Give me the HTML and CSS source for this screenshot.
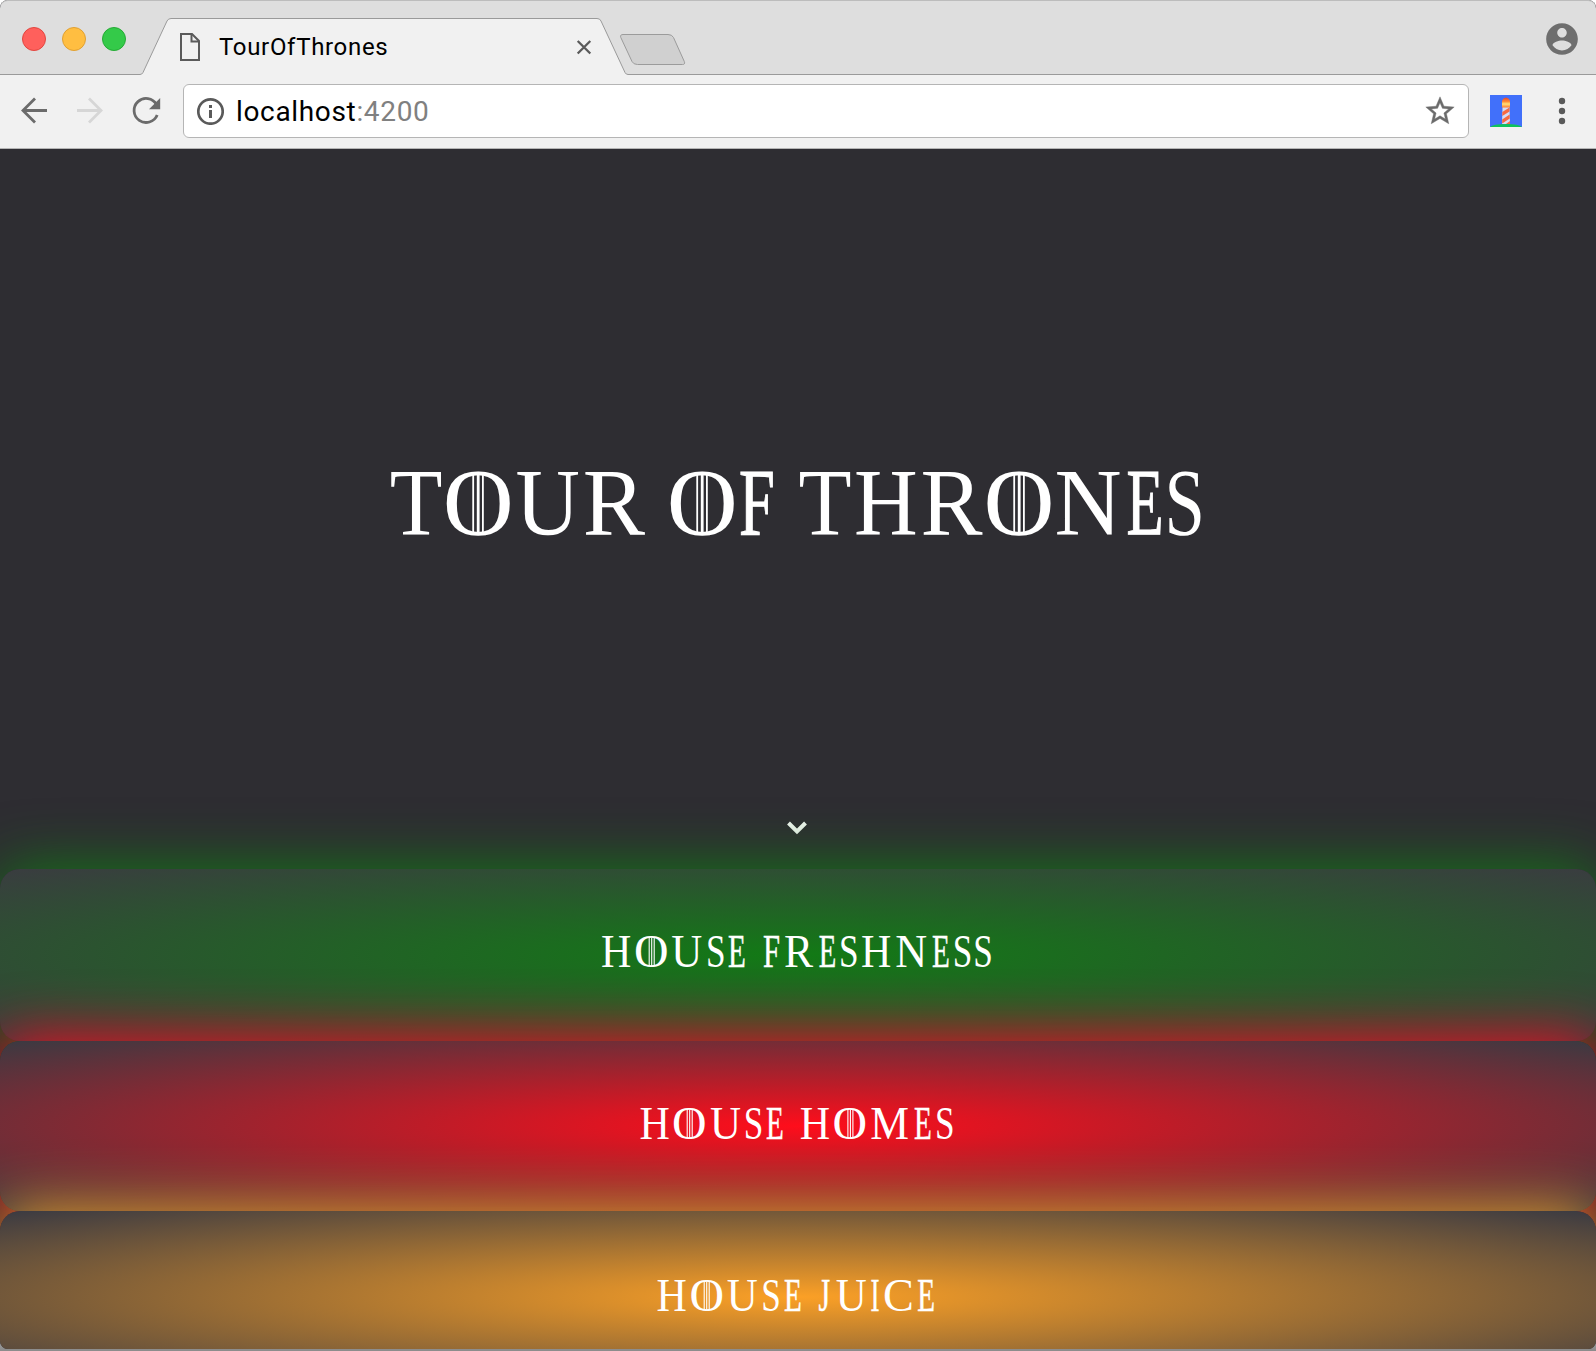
FILE: index.html
```html
<!DOCTYPE html>
<html lang="en">
<head>
<meta charset="utf-8">
<title>TourOfThrones</title>
<link rel="stylesheet" href="styles.css">
</head>
<body>
<div class="window">
  <div class="tabstrip">
    <svg class="tab-shape" width="1596" height="75" viewBox="0 0 1596 75">
      <path d="M-1 74.5H140Q142 74.5 143 72.5L167 21Q168.200 18.500 171 18.500H597Q600 18.500 601 21L625 72.500Q626 74.500 628 74.500H1597V76H-1Z" fill="#f1f1f1" stroke="#9a9a9a"/>
      <path d="M623 34.500H668Q672 34.500 673.500 37.500L684.300 61.500Q685.500 64.500 682.500 64.500H637.500Q633.500 64.500 632 61.500L620.800 37.500Q619.800 34.500 623 34.500Z" fill="#d0d0d0" stroke="#9b9b9b"/>
    </svg>
    <div class="lights">
      <span class="light close"></span><span class="light minimize"></span><span class="light expand"></span>
    </div>
    <div class="tab">
      <svg width="22" height="30" viewBox="179 32 22 30" fill="none" stroke="#5a5a5a" stroke-width="2"><path d="M181 34H192L199 41V60H181Z"/><path d="M191.500 34V41.500H199"/></svg>
      <span class="tab-title">TourOfThrones</span>
      <svg class="tab-close" width="18" height="18" viewBox="575 38 18 18"><path d="M577.700 41L590.300 53.500M590.300 41L577.700 53.500" stroke="#5a5a5a" stroke-width="2.300"/></svg>
    </div>
    <svg class="avatar" width="38" height="38" viewBox="0 0 24 24" fill="#6e6e6e"><path d="M12 2C6.480 2 2 6.480 2 12s4.480 10 10 10 10-4.480 10-10S17.520 2 12 2zm0 3c1.660 0 3 1.340 3 3s-1.340 3-3 3-3-1.340-3-3 1.340-3 3-3zm0 14.200c-2.500 0-4.710-1.280-6-3.220.030-1.990 4-3.080 6-3.080 1.990 0 5.970 1.090 6 3.080-1.290 1.940-3.500 3.220-6 3.220z"/></svg>
  </div>

  <div class="toolbar">
    <svg class="nav-icons" width="145" height="32" viewBox="18 95 145 32" fill="none" stroke-width="2.800">
      <path d="M47 110.500H23M35 98.500L23 110.500L35 122.500" stroke="#6b6b6b"/>
      <path d="M77 110.500H101M89 98.500L101 110.500L89 122.500" stroke="#d6d6d6"/>
      <path d="M156.500 104.500A12 12 0 1 0 157.200 115" stroke="#6b6b6b"/>
      <path d="M160.200 98V109.200H149Z" fill="#6b6b6b"/>
    </svg>
    <div class="omnibox">
      <svg class="info" width="28" height="28" viewBox="0 0 28 28"><circle cx="14.500" cy="14.500" r="12.200" fill="none" stroke="#5a5a5a" stroke-width="2.700"/><path d="M13 8h3v3h-3zM13 13h3v8h-3z" fill="#5a5a5a"/></svg>
      <span class="url">localhost<span class="port">:4200</span></span>
      <svg class="star" width="34" height="34" viewBox="0 0 24 24" fill="#6b6b6b" stroke="#6b6b6b" stroke-width=".3"><path d="M22 9.240l-7.190-.620L12 2 9.190 8.630 2 9.240l5.460 4.730L5.820 21 12 17.270 18.180 21l-1.630-7.030L22 9.240zM12 15.400l-3.760 2.270 1-4.280-3.320-2.880 4.380-.380L12 6.100l1.710 4.040 4.380.380-3.320 2.880 1 4.280L12 15.400z"/></svg>
    </div>
    <svg class="lighthouse" width="32" height="32" viewBox="0 0 32 32">
      <defs><linearGradient id="lamp" x2="0" y2="1"><stop offset="0" stop-color="#e8432c"/><stop offset=".4" stop-color="#ff8a35"/><stop offset=".65" stop-color="#ffe27a"/><stop offset="1" stop-color="#ff7a2e"/></linearGradient></defs>
      <rect width="32" height="32" fill="#4170fa"/>
      <path d="M0 32Q3 29 16 29T32 32Z" fill="#0ec25c"/>
      <path d="M12.500 12H19.500L20 29H12Z" fill="#d5dcf4"/>
      <path d="M12.300 17L19.500 12.500V16.500L12.300 21ZM12.200 24.500L19.700 19.500V23.500L12.200 28.500ZM16 29L20 26V29Z" fill="#f8693f"/>
      <path d="M12 12.500V6.500Q12.500 3 16 2.500Q19.500 3 20 6.500V12.500Z" fill="url(#lamp)"/>
    </svg>
    <svg width="8" height="28" viewBox="0 0 8 28" fill="#5a5a5a"><circle cx="4" cy="4" r="3.200"/><circle cx="4" cy="14" r="3.200"/><circle cx="4" cy="24" r="3.200"/></svg>
  </div>

  <main class="page">
    <header class="hero">
      <h1 class="title">
        <svg class="lettering" width="1596" height="120" viewBox="0 445 1596 120">
          <text class="display" y="534.700"><tspan x="389.800" textLength="52.700" lengthAdjust="spacingAndGlyphs">T</tspan><tspan x="442.700" textLength="71" lengthAdjust="spacingAndGlyphs">O</tspan><tspan x="515.500" textLength="64.400" lengthAdjust="spacingAndGlyphs">U</tspan><tspan x="582.700" textLength="62.300" lengthAdjust="spacingAndGlyphs">R</tspan> <tspan x="666.700" textLength="71" lengthAdjust="spacingAndGlyphs">O</tspan><tspan class="narrow" x="738.900" textLength="35.700" lengthAdjust="spacingAndGlyphs">F</tspan> <tspan x="798.500" textLength="53" lengthAdjust="spacingAndGlyphs">T</tspan><tspan x="854" textLength="63.700" lengthAdjust="spacingAndGlyphs">H</tspan><tspan x="920.400" textLength="62" lengthAdjust="spacingAndGlyphs">R</tspan><tspan x="983.400" textLength="71" lengthAdjust="spacingAndGlyphs">O</tspan><tspan x="1054.600" textLength="67.100" lengthAdjust="spacingAndGlyphs">N</tspan><tspan class="narrow" x="1126.600" textLength="37" lengthAdjust="spacingAndGlyphs">E</tspan><tspan x="1164.600" textLength="40.400" lengthAdjust="spacingAndGlyphs">S</tspan></text>
          <path class="bars" d="M473.200 473V533M482.900 473V533M697.200 473V533M706.900 473V533M1014.200 473V533M1023.900 473V533"/>
          <path class="bars middle" d="M478.200 473V533M702.200 473V533M1019.200 473V533"/>
        </svg>
      </h1>
      <svg class="chevron" width="22" height="16" viewBox="0 0 22 16"><path d="M2.500 3L11 11.500L19.500 3" fill="none" stroke="#f2f7f2" stroke-width="4"/></svg>
    </header>

    <section class="house freshness">
      <svg class="lettering" width="1596" height="60" viewBox="0 922 1596 60">
        <text class="name" y="966.600"><tspan x="601" textLength="30.300" lengthAdjust="spacingAndGlyphs">H</tspan><tspan x="633.900" textLength="34.600" lengthAdjust="spacingAndGlyphs">O</tspan><tspan x="671.200" textLength="31" lengthAdjust="spacingAndGlyphs">U</tspan><tspan x="706" textLength="19.600" lengthAdjust="spacingAndGlyphs">S</tspan><tspan class="slim" x="728.100" textLength="17.800" lengthAdjust="spacingAndGlyphs">E</tspan> <tspan class="slim" x="763.100" textLength="17" lengthAdjust="spacingAndGlyphs">F</tspan><tspan x="784.100" textLength="29.100" lengthAdjust="spacingAndGlyphs">R</tspan><tspan class="slim" x="818.800" textLength="17.500" lengthAdjust="spacingAndGlyphs">E</tspan><tspan x="839" textLength="19.600" lengthAdjust="spacingAndGlyphs">S</tspan><tspan x="861" textLength="30.300" lengthAdjust="spacingAndGlyphs">H</tspan><tspan x="895.300" textLength="31.900" lengthAdjust="spacingAndGlyphs">N</tspan><tspan class="slim" x="932.100" textLength="17.800" lengthAdjust="spacingAndGlyphs">E</tspan><tspan x="952.700" textLength="19.600" lengthAdjust="spacingAndGlyphs">S</tspan><tspan x="973.300" textLength="19.600" lengthAdjust="spacingAndGlyphs">S</tspan></text>
        <path class="bars thin" d="M649.200 937.500V966M651.700 937.500V966M654.200 937.500V966"/>
      </svg>
    </section>
    <section class="house homes">
      <svg class="lettering" width="1596" height="60" viewBox="0 1094 1596 60">
        <text class="name" y="1138.600"><tspan x="639.400" textLength="30.300" lengthAdjust="spacingAndGlyphs">H</tspan><tspan x="671.900" textLength="34.600" lengthAdjust="spacingAndGlyphs">O</tspan><tspan x="709.900" textLength="31" lengthAdjust="spacingAndGlyphs">U</tspan><tspan x="743.700" textLength="19.600" lengthAdjust="spacingAndGlyphs">S</tspan><tspan class="slim" x="766.100" textLength="17.800" lengthAdjust="spacingAndGlyphs">E</tspan> <tspan x="799.700" textLength="30.300" lengthAdjust="spacingAndGlyphs">H</tspan><tspan x="832.600" textLength="34.600" lengthAdjust="spacingAndGlyphs">O</tspan><tspan x="870.300" textLength="38.700" lengthAdjust="spacingAndGlyphs">M</tspan><tspan class="slim" x="914.100" textLength="17.800" lengthAdjust="spacingAndGlyphs">E</tspan><tspan x="935" textLength="19.600" lengthAdjust="spacingAndGlyphs">S</tspan></text>
        <path class="bars thin" d="M687.200 1109.500V1138M689.700 1109.500V1138M692.200 1109.500V1138M847.900 1109.500V1138M850.400 1109.500V1138M852.900 1109.500V1138"/>
      </svg>
    </section>
    <section class="house juice">
      <svg class="lettering" width="1596" height="60" viewBox="0 1266 1596 60">
        <text class="name" y="1310.600"><tspan x="656.500" textLength="30.300" lengthAdjust="spacingAndGlyphs">H</tspan><tspan x="689.400" textLength="34.600" lengthAdjust="spacingAndGlyphs">O</tspan><tspan x="726.700" textLength="31" lengthAdjust="spacingAndGlyphs">U</tspan><tspan x="761.200" textLength="19.600" lengthAdjust="spacingAndGlyphs">S</tspan><tspan class="slim" x="783.900" textLength="17.800" lengthAdjust="spacingAndGlyphs">E</tspan> <tspan class="slim" x="818.400" textLength="11.600" lengthAdjust="spacingAndGlyphs">J</tspan><tspan x="835.700" textLength="31" lengthAdjust="spacingAndGlyphs">U</tspan><tspan class="slim" x="870.500" textLength="9" lengthAdjust="spacingAndGlyphs">I</tspan><tspan x="883" textLength="30.900" lengthAdjust="spacingAndGlyphs">C</tspan><tspan class="slim" x="917.300" textLength="17.800" lengthAdjust="spacingAndGlyphs">E</tspan></text>
        <path class="bars thin" d="M704.200 1281.500V1310M706.700 1281.500V1310M709.200 1281.500V1310"/>
      </svg>
    </section>
  </main>
</div>
</body>
</html>
```

FILE: styles.css
```css
* { box-sizing: border-box; }

body {
  margin: 0;
  height: 1351px;
  overflow: hidden;
  background: linear-gradient(#fff 0 1300px, #8c8c8c 1350px);
  font-family: Roboto, "Liberation Sans", sans-serif;
}

svg { display: block; flex: none; }

.window {
  display: flex;
  flex-direction: column;
  height: 1349px;
  overflow: hidden;
  border-radius: 8px;
  background: #2e2d32;
}

/* Browser frame */
.tabstrip {
  position: relative;
  display: flex;
  align-items: center;
  flex: none;
  height: 75px;
  padding: 3px 15px 0 22px;
  border-radius: 8px 8px 0 0;
  background: #dedede;
  box-shadow: inset 0 1px #bcbcbc;
}

.tab-shape { position: absolute; left: 0; top: 0; }

.lights { display: flex; gap: 16px; }

.light {
  width: 24px;
  height: 24px;
  border: 1px solid;
  border-radius: 50%;
}

.close { background: #ff605c; border-color: #e2463f; }
.minimize { background: #ffbe41; border-color: #e0a032; }
.expand { background: #34ca49; border-color: #25ab35; }

.tab {
  position: relative;
  display: flex;
  align-items: center;
  width: 414px;
  margin: 15px 0 0 53px;
}

.tab-title {
  margin-left: 18px;
  font-size: 24px;
  line-height: 30px;
  letter-spacing: 0.68px;
  color: #000;
}

.tab-close { margin-left: auto; }

.avatar { position: relative; margin-left: auto; }

.toolbar {
  display: flex;
  align-items: center;
  flex: none;
  height: 74px;
  padding: 0 30px 2px 18px;
  border-bottom: 1px solid #b5b5b5;
  background: #f1f1f1;
}

.omnibox {
  display: flex;
  align-items: center;
  width: 1286px;
  height: 54px;
  margin: 1px 21px 0 20px;
  padding: 0 11px 0 12px;
  border: 1px solid #b5b5b5;
  border-radius: 6px;
  background: #fff;
}

.url {
  margin: 0 auto 0 12px;
  padding-top: 2px;
  font-size: 28px;
  line-height: 40px;
  letter-spacing: 0.66px;
  color: #000;
}

.port { color: #808080; }

.lighthouse { margin-right: 36px; }

/* Page */
.page { display: flex; flex-direction: column; color: #fff; }

.hero {
  display: flex;
  flex-direction: column;
  align-items: center;
  height: 720px;
  padding-top: 296px;
}

.title { margin: 0; }

.chevron { margin: 255px 2px 0 0; }

.lettering {
  overflow: visible;
  fill: #fff;
  font-family: "Liberation Serif", serif;
  font-weight: 400;
}

.display { font-size: 96px; }
.name { font-size: 46px; }

.narrow { stroke: #fff; stroke-width: 1.2; }
.slim { stroke: #fff; stroke-width: 0.5; }

.bars { fill: none; stroke: #fff; stroke-width: 1.8; }
.middle { stroke-width: 2.8; }
.thin { stroke-width: 1.1; }

.house {
  flex: none;
  border-radius: 20px;
  padding-top: 53px;
}

.freshness {
  height: 172px;
  background: radial-gradient(#127a15, #3a3c40);
  box-shadow: 0 0 60px #127a15;
}

.homes {
  height: 170px;
  background: radial-gradient(#ff0d1b, #3a3a42);
  box-shadow: 0 0 60px #ff0d1b;
}

.juice {
  height: 172px;
  padding-top: 55px;
  background: radial-gradient(#fba026, #3a3a42);
  box-shadow: 0 0 60px #fba026;
}
```
